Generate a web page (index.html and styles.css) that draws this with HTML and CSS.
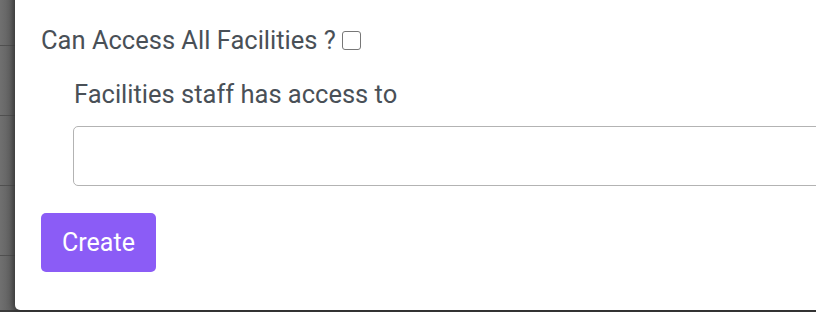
FILE: index.html
```html
<!DOCTYPE html>
<html>
<head>
<meta charset="utf-8">
<link rel="stylesheet" href="styles.css">
</head>
<body>
<div class="backdrop">
  <div class="row"></div>
  <div class="row"></div>
  <div class="row"></div>
  <div class="row"></div>
  <div class="row"></div>
</div>
<div class="modal">
  <form class="form">
    <label class="check-row">Can Access All Facilities ? <input type="checkbox" class="check"></label>
    <div class="sub">
      <label class="sub-label">Facilities staff has access to</label>
      <input type="text" class="field">
    </div>
    <button type="button" class="btn">Create</button>
  </form>
</div>
</body>
</html>
```
FILE: styles.css
```css
html, body {
  margin: 0;
  padding: 0;
  width: 816px;
  height: 312px;
  overflow: hidden;
}
body {
  position: relative;
  background: #3b3b3b;
  font-family: Roboto, "Liberation Sans", sans-serif;
}
.backdrop {
  height: 310px;
  width: 20px;
  background: linear-gradient(to right, #707070 0%, #626262 50%, #4a4a4a 100%);
  display: flex;
  flex-direction: column;
  overflow: hidden;
}
.row {
  flex: 0 0 70px;
  box-sizing: border-box;
  border-bottom: 1px solid #505050;
}
.row:first-child {
  flex-basis: 46px;
}
.modal {
  position: absolute;
  left: 15px;
  top: -10px;
  width: 900px;
  height: 320px;
  background: #fff;
  border-radius: 5px;
  box-shadow: -2px 0 6px rgba(0,0,0,0.35);
}
.form {
  display: flex;
  flex-direction: column;
  align-items: flex-start;
  padding: 35px 0 0 26px;
  color: #495057;
}
.check-row {
  display: flex;
  align-items: center;
  font-size: 25.5px;
  line-height: 30px;
  height: 30px;
}
.check {
  appearance: none;
  -webkit-appearance: none;
  width: 19px;
  height: 19px;
  margin: 0 0 0 6px;
  border: 1.5px solid #777;
  border-radius: 3px;
  background: #fff;
  box-sizing: border-box;
}
.sub {
  display: flex;
  flex-direction: column;
  margin-left: 32px;
  margin-top: 24px;
}
.sub-label {
  font-size: 25.5px;
  line-height: 30px;
  margin-left: 1px;
}
.field {
  margin-top: 17px;
  width: 800px;
  height: 60px;
  box-sizing: border-box;
  border: 1px solid #b3b3b3;
  border-radius: 5px;
  font-size: 20px;
  font-family: inherit;
}
.btn {
  margin-top: 27px;
  width: 115px;
  height: 59px;
  background: #8b5cf6;
  border: none;
  border-radius: 5px;
  color: #fff;
  font-family: inherit;
  font-size: 25px;
}
```
